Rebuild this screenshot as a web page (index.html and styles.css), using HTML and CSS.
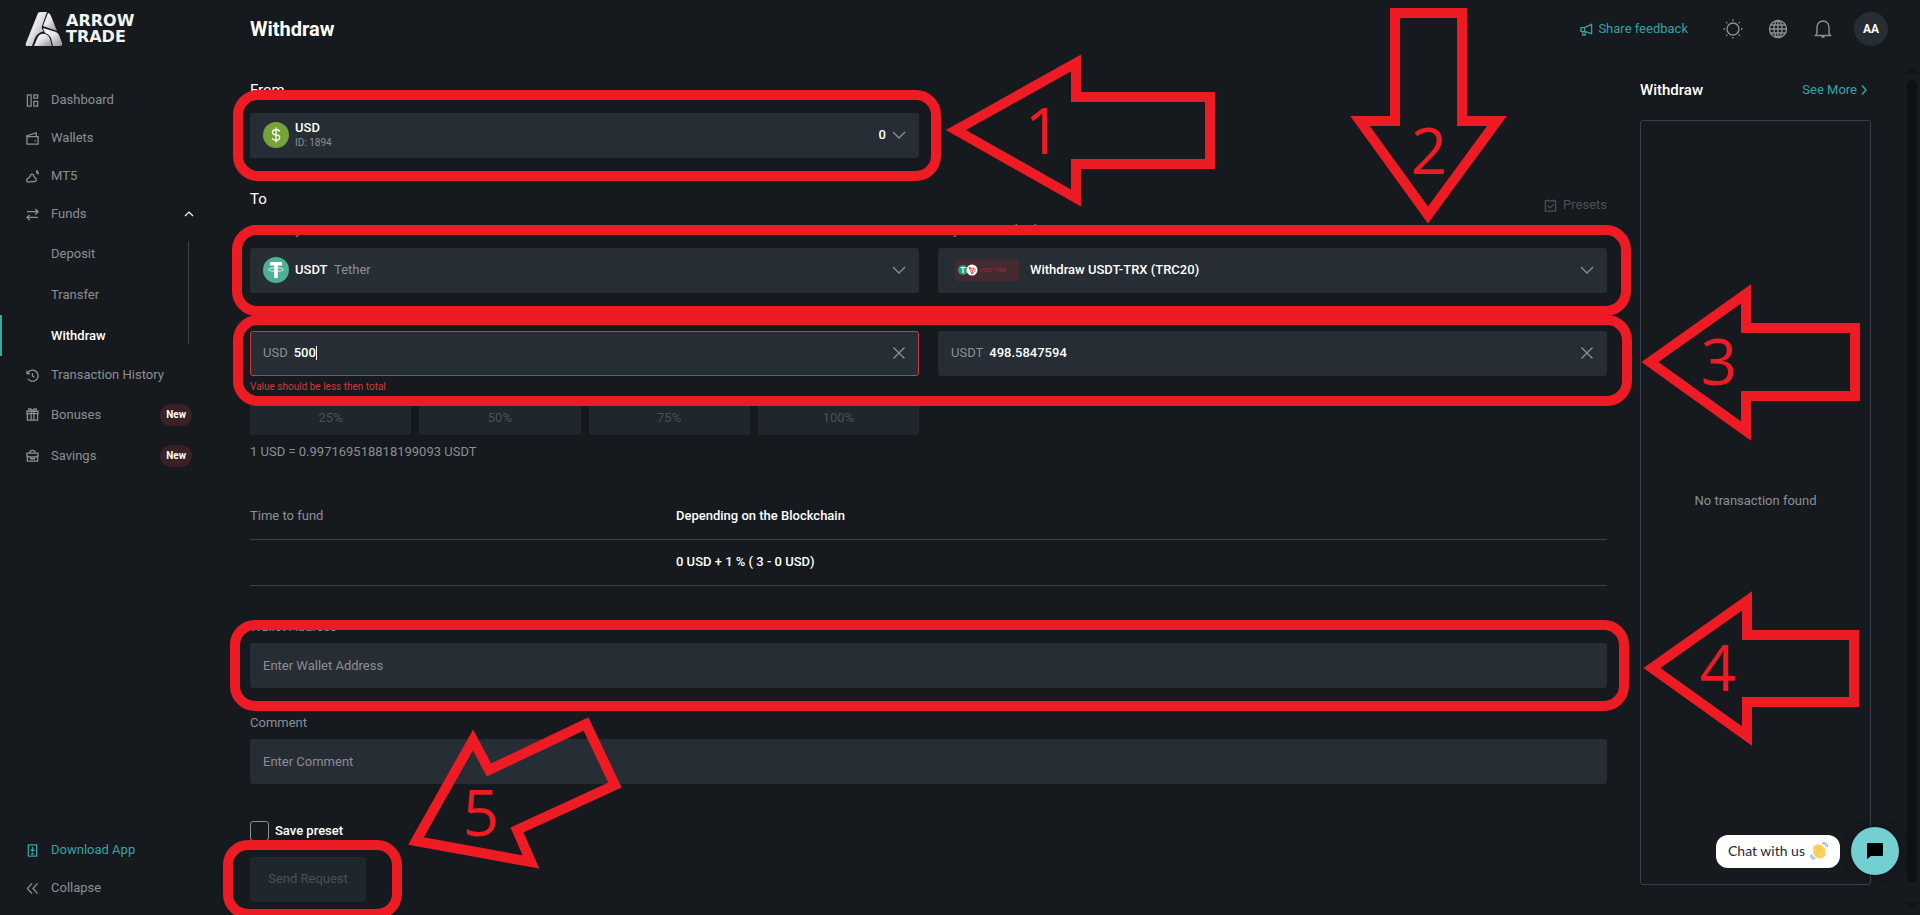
FILE: index.html
```html
<!DOCTYPE html>
<html lang="en">
<head>
    <meta charset="UTF-8">
    <meta name="viewport" content="width=device-width, initial-scale=1.0">
    <title>Withdraw - Arrow Trade</title>
    <link rel="stylesheet" href="styles.css">
</head>
<body>

    <div class="app">

        <!-- Sidebar -->
        <aside class="sidebar">
            <a class="logo" href="#">
                <svg width="38" height="36" viewBox="0 0 38 36">
                    <defs>
                        <linearGradient id="metal" x1="0" y1="0" x2="1" y2="1">
                            <stop offset="0" stop-color="#ffffff"/>
                            <stop offset="0.45" stop-color="#e6e6e8"/>
                            <stop offset="1" stop-color="#8e9094"/>
                        </linearGradient>
                    </defs>
                    <path fill="url(#metal)" d="M13 2 Q14 1 16 1 H22 L17 15 Q16 18 19 20 Q12 22 10 27 L7 35 H2 Q0 35 1 32 Z"/>
                    <path fill="url(#metal)" d="M23 2 Q25 2 26 5 L32 20 L18 15 Z"/>
                    <path fill="url(#metal)" d="M18 17 L31 21 Q33 22 34 24 L37 32 Q38 35 35 35 H28 L26 27 Q24 23 20 22 Z"/>
                    <path fill="url(#metal)" d="M12 28 Q14 22 20 23 Q24 24 25 28 L27 35 H9 Z"/>
                </svg>
                <span class="logo-text">ARROW<br>TRADE</span>
            </a>

            <nav class="menu">
                <a class="menu-item" href="#">
                    <svg class="icon" viewBox="0 0 14 14"><path d="M1.500 1h4v12h-4zM8.500 1h4v3.500h-4zM8.500 8h4v5h-4z"/></svg>
                    Dashboard
                </a>
                <a class="menu-item" href="#">
                    <svg class="icon" viewBox="0 0 14 14"><path d="M1 5h12v8H1zM1 5V4l10-3v3.500M10 8.500v1.500"/></svg>
                    Wallets
                </a>
                <a class="menu-item" href="#">
                    <svg class="icon" viewBox="0 0 14 14"><path d="M6.500 4.500a1.800 1.800 0 0 1 1.800 2l2 2.500a2 2 0 0 1-1 3.500L6.500 12.500 3 13a2 2 0 0 1-.500-4l2.200-2.500a1.800 1.800 0 0 1 1.800-2zM5 12.500h3M13 1h-1.500v1.500H13V4h-1.500"/></svg>
                    MT5
                </a>
                <a class="menu-item" href="#">
                    <svg class="icon" viewBox="0 0 14 14"><path d="M1 4h12M10 1l3 3-3 3M13 10H1M4 7.500L1 10l3 3"/></svg>
                    Funds
                    <svg class="menu-arrow" viewBox="0 0 10 10"><path d="M1 7l4-4 4 4"/></svg>
                </a>
                <div class="submenu">
                    <a class="submenu-item" href="#">Deposit</a>
                    <a class="submenu-item" href="#">Transfer</a>
                    <a class="submenu-item active" href="#">Withdraw</a>
                </div>
                <a class="menu-item" href="#">
                    <svg class="icon" viewBox="0 0 14 14"><path d="M1 1.500V5h3.500M1.500 5A6 6 0 1 1 2 10.500M7 4.500V7.500l2 1.500"/></svg>
                    Transaction History
                </a>
                <a class="menu-item tall" href="#">
                    <svg class="icon" viewBox="0 0 14 14"><path d="M1 3.500h12V6H1zM1.500 6v7h11V6M5.500 3.500V13M8.500 3.500V13M3 3.500V1h2l2 2 2-2h2v2.500"/></svg>
                    Bonuses
                    <span class="tag">New</span>
                </a>
                <a class="menu-item tall" href="#">
                    <svg class="icon" viewBox="0 0 14 14"><path d="M1.500 7.500V13h11V7.500M1 4.500h12v3l-3 1H4l-3-1zM5 8v2.500h4V8M4 4.500Q4 1.500 7 1.500t3 3"/></svg>
                    Savings
                    <span class="tag">New</span>
                </a>
            </nav>

            <div class="menu-bottom">
                <a class="menu-item teal" href="#">
                    <svg class="icon" viewBox="0 0 14 14"><path d="M2.500 1h9v12h-9zM7 3v5M5 6l2 2 2-2M5.500 10.500h3"/></svg>
                    Download App
                </a>
                <a class="menu-item" href="#">
                    <svg class="icon" viewBox="0 0 14 14"><path d="M6.500 1.500L1.500 7l5 5.500M12.500 1.500L7.500 7l5 5.500"/></svg>
                    Collapse
                </a>
            </div>
        </aside>

        <div class="page">

            <header class="topbar">
                <h1>Withdraw</h1>
                <a class="feedback" href="#">
                    <svg class="icon" viewBox="0 0 14 14"><path d="M1 5h4l7.500-3.500v10L5 9H1zM5 5v4M3 9v4h2.500V9"/></svg>
                    Share feedback
                </a>
                <div class="tools">
                    <button class="tool" type="button" aria-label="Theme">
                        <svg viewBox="0 0 20 20"><circle cx="10" cy="10" r="6"/><path d="M10 .5v1.500M10 18v1.500M.5 10h1.500M18 10h1.500M3.300 3.300l1 1M15.700 15.700l1 1M3.300 16.700l1-1M15.700 4.300l1-1"/></svg>
                    </button>
                    <button class="tool" type="button" aria-label="Language">
                        <svg viewBox="0 0 20 20"><circle cx="10" cy="10" r="8.500"/><ellipse cx="10" cy="10" rx="4" ry="8.500"/><path d="M10 1.500v17M1.500 10h17M2.500 6h15M2.500 14h15"/></svg>
                    </button>
                    <button class="tool" type="button" aria-label="Notifications">
                        <svg viewBox="0 0 20 20"><path d="M2.500 16.500h15l-1.500-2.500V8a6 6 0 0 0-12 0v6zM8.500 18h3"/></svg>
                    </button>
                    <button class="avatar" type="button">AA</button>
                </div>
            </header>

            <div class="columns">
                <main>
                    <form>
                        <h2><label for="fromWallet">From</label></h2>
                        <div class="row">
                            <div class="field">
                                <svg class="coin" viewBox="0 0 26 26">
                                    <circle cx="13" cy="13" r="13" fill="#75a33a"/>
                                    <path d="M16.500 9.500Q16 7.500 13 7.500T9.500 10 13 12.800 16.700 15.800 13 18.300 9.300 16M13 5.500v15" fill="none" stroke="#fff" stroke-width="1.300"/>
                                </svg>
                                <div class="wallet">
                                    <select id="fromWallet"><option>USD</option></select>
                                    <small>ID: 1894</small>
                                </div>
                                <span class="balance">0</span>
                                <svg class="chevron" viewBox="0 0 14 14"><path d="M1 4l6 6 6-6"/></svg>
                            </div>
                            <div></div>
                        </div>

                        <div class="to-head">
                            <h2>To</h2>
                            <button class="presets" type="button" disabled>
                                <svg class="icon" viewBox="0 0 14 14"><path d="M1.500 2h11v11h-11zM4 2V.5M10 2V.5M4 7l2.500 2.500L10.500 5.500"/></svg>
                                Presets
                            </button>
                        </div>

                        <div class="row">
                            <div>
                                <label class="caption" for="currency">Currency</label>
                                <div class="field">
                                    <svg class="coin" viewBox="0 0 26 26">
                                        <circle cx="13" cy="13" r="13" fill="#50af95"/>
                                        <path d="M7 5h12v3.500h-4.200V21h-3.600V8.500H7z" fill="#fff"/>
                                        <ellipse cx="13" cy="12.500" rx="7.500" ry="1.800" fill="none" stroke="#fff" stroke-width="0.800"/>
                                    </svg>
                                    <select id="currency"><option>USDT</option></select>
                                    <span class="muted">Tether</span>
                                    <svg class="chevron" viewBox="0 0 14 14"><path d="M1 4l6 6 6-6"/></svg>
                                </div>
                            </div>
                            <div>
                                <label class="caption" for="method">Payment Method</label>
                                <div class="field method">
                                    <span class="pair">
                                        <svg width="20" height="12" viewBox="0 0 20 12">
                                            <circle cx="5" cy="6" r="5" fill="#26a17b"/>
                                            <path d="M2.500 3.500h5M5 3.500v5.500" stroke="#fff" stroke-width="1.200"/>
                                            <circle cx="14" cy="6" r="5.500" fill="#fff"/>
                                            <path d="M11 3.500l5 1 1.500 1.500-3.500 4zM11 3.500l3.500 2.500 2-1.500M14.500 6l-.500 4" fill="none" stroke="#d8363c" stroke-width="0.800"/>
                                        </svg>
                                        USDT - TRX
                                    </span>
                                    <select id="method"><option>Withdraw USDT-TRX (TRC20)</option></select>
                                    <svg class="chevron" viewBox="0 0 14 14"><path d="M1 4l6 6 6-6"/></svg>
                                </div>
                            </div>
                        </div>

                        <div class="row amounts">
                            <div>
                                <div class="field invalid">
                                    <label class="muted" for="amountFrom">USD</label>
                                    <input class="amount" id="amountFrom" type="text" value="500">
                                    <span class="caret"></span>
                                    <button class="clear" type="button" aria-label="Clear"><svg viewBox="0 0 14 14"><path d="M1.500 1.500l11 11M12.500 1.500l-11 11"/></svg></button>
                                </div>
                                <p class="error">Value should be less then total</p>
                                <div class="percents">
                                    <button type="button" disabled>25%</button>
                                    <button type="button" disabled>50%</button>
                                    <button type="button" disabled>75%</button>
                                    <button type="button" disabled>100%</button>
                                </div>
                                <p class="rate">1 USD = 0.997169518818199093 USDT</p>
                            </div>
                            <div>
                                <div class="field">
                                    <label class="muted" for="amountTo">USDT</label>
                                    <input class="amount" id="amountTo" type="text" value="498.5847594">
                                    <button class="clear" type="button" aria-label="Clear"><svg viewBox="0 0 14 14"><path d="M1.500 1.500l11 11M12.500 1.500l-11 11"/></svg></button>
                                </div>
                            </div>
                        </div>

                        <table class="info">
                            <tr>
                                <th>Time to fund</th>
                                <td>Depending on the Blockchain</td>
                            </tr>
                            <tr>
                                <th></th>
                                <td>0 USD + 1 % ( 3 - 0 USD)</td>
                            </tr>
                        </table>

                        <label class="caption" for="walletAddress">Wallet Address</label>
                        <input class="field" id="walletAddress" type="text" placeholder="Enter Wallet Address">

                        <label class="caption comment" for="comment">Comment</label>
                        <input class="field" id="comment" type="text" placeholder="Enter Comment">

                        <label class="save">
                            <input type="checkbox">
                            Save preset
                        </label>

                        <button class="send" type="submit" disabled>Send Request</button>
                    </form>
                </main>

                <section class="history">
                    <div class="history-head">
                        <h2>Withdraw</h2>
                        <a href="#">See More <svg width="6" height="12" viewBox="0 0 6 12"><path d="M1 1.500L5 6l-4 4.500"/></svg></a>
                    </div>
                    <div class="history-box">No transaction found</div>
                </section>
            </div>
        </div>

        <div class="scroll">
            <span class="scroll-up"></span>
            <span class="scroll-thumb"></span>
            <span class="scroll-down"></span>
        </div>
    </div>

    <div class="chat">
        <div class="chat-text">
            Chat with us
            <svg width="18" height="18" viewBox="0 0 18 18">
                <path d="M3 7Q2 5 4 4.500L5.500 3Q7 1.500 8.500 2.500L12 3 15 6.500 16 12Q14 17 9 16.500 5 16 3.500 12Q2 10 3.500 9.500Z" fill="#ffd25f"/>
                <path d="M6 7l4 3M8 5l4 3.500M5.500 10l3 2.500" stroke="#e6b140" stroke-width="0.700" fill="none"/>
                <path d="M12 1.500q3.500-.5 4 3.500M13 .5q4.500 0 4.500 4.500M1.500 12q0 4 4 4.500M.5 13.500q0 3.500 3.500 4" stroke="#5da8e0" stroke-width="0.900" fill="none"/>
            </svg>
        </div>
        <button class="chat-button" type="button" aria-label="Open chat">
            <svg width="18" height="18" viewBox="0 0 18 18"><path d="M2 1h14q1 0 1 1v11q0 1-1 1H5l-4 3V2q0-1 1-1z" fill="#000"/></svg>
        </button>
    </div>

    <!-- Step marks drawn over the page -->
    <svg class="steps" width="1920" height="915" viewBox="0 0 1920 915">
        <rect x="238" y="95" width="698" height="81" rx="20"/>
        <rect x="237" y="230" width="1389" height="81" rx="20"/>
        <rect x="238" y="320" width="1389" height="81" rx="20"/>
        <rect x="235" y="625" width="1389" height="81" rx="20"/>
        <rect x="228" y="845" width="169" height="69" rx="20"/>
        <path d="M956 130L1076 63V97H1210V164H1076V198Z"/>
        <path d="M1395 13H1462V121H1497L1428 215 1360 121H1395Z"/>
        <path d="M1650 362L1746 294V328H1855V396H1746V431Z"/>
        <path d="M1652 668L1747 601V635H1854V702H1747V736Z"/>
        <path d="M416 841L473 740 489 770 586 724 615 785 517 830 531 862Z"/>
        <text x="1043" y="154">1</text>
        <text x="1429" y="174">2</text>
        <text x="1719" y="385">3</text>
        <text x="1718" y="691">4</text>
        <text x="481" y="836">5</text>
    </svg>

</body>
</html>
```

FILE: styles.css
```css
* {
    box-sizing: border-box;
}
body {
    margin: 0;
    background-color: #161a1e;
    color: #8a8f94;
    font-family: Roboto, "Liberation Sans", sans-serif;
    font-size: 13px;
    line-height: 16px;
    position: relative;
    overflow: hidden;
}
a {
    color: inherit;
    text-decoration: none;
}
h1, h2, p {
    margin: 0;
}
h1, h2 {
    color: #fff;
}
h1 {
    font-size: 20px;
    font-weight: 700;
    line-height: 24px;
}
h2 {
    font-size: 15px;
    font-weight: 400;
    line-height: 20px;
}
button, input, select {
    font: inherit;
    color: inherit;
    background: none;
    border: none;
    padding: 0;
    margin: 0;
}
svg {
    flex: none;
    fill: none;
    stroke: currentColor;
}
.logo svg, .coin, .pair svg, .chat svg {
    stroke: none;
}
.icon {
    width: 13px;
    height: 13px;
    stroke-width: 1.4;
}
.app {
    display: flex;
    min-height: 100vh;
}

/* Sidebar */
.sidebar {
    width: 250px;
    flex: none;
    display: flex;
    flex-direction: column;
}
.logo {
    display: flex;
    align-items: center;
    gap: 3px;
    height: 81px;
    padding: 0 0 24px 25px;
}
.logo-text {
    color: #f2f2f3;
    font-family: "DejaVu Sans", sans-serif;
    font-weight: 700;
    font-size: 16px;
    line-height: 16px;
}
.menu-item {
    display: flex;
    align-items: center;
    gap: 12px;
    height: 38px;
    padding-left: 26px;
    padding-right: 58px;
}
.menu-item.tall {
    height: 41px;
}
.menu-arrow {
    width: 10px;
    height: 10px;
    margin-left: auto;
    margin-right: -2px;
    color: #fff;
    stroke-width: 1.2;
}
.submenu {
    position: relative;
}
.submenu::after {
    content: "";
    position: absolute;
    left: 188px;
    top: 8px;
    bottom: 12px;
    border-left: 1px solid #3c424a;
}
.submenu-item {
    display: flex;
    align-items: center;
    height: 41px;
    padding-left: 49px;
    border-left: 2px solid transparent;
}
.submenu-item.active {
    color: #fff;
    font-weight: 500;
    border-color: #3aa6a6;
}
.tag {
    margin-left: auto;
    padding: 3px 6px;
    border-radius: 12px;
    background-color: #3b2024;
    color: #fff;
    font-size: 10px;
    font-weight: 700;
}
.teal, .feedback, .history-head a {
    color: #35a3a3;
}
.menu-bottom {
    margin-top: auto;
    padding-bottom: 8px;
}

/* Top bar */
.page {
    flex: 1;
}
.topbar {
    display: flex;
    align-items: center;
    height: 58px;
    padding-right: 19px;
}
.feedback {
    display: flex;
    align-items: center;
    gap: 5px;
    margin-left: auto;
}
.tools {
    display: flex;
    align-items: center;
    gap: 25px;
    margin-left: 35px;
}
.tool {
    width: 20px;
    height: 20px;
}
.tool svg {
    display: block;
    stroke-width: 1.4;
}
.avatar {
    width: 34px;
    height: 34px;
    margin-left: -4px;
    border-radius: 50%;
    background-color: #272d34;
    color: #fff;
    font-size: 12px;
    font-weight: 700;
}

/* Form */
.columns {
    display: flex;
    gap: 33px;
    padding: 22px 36px 0 0;
}
main {
    flex: 1;
}
.row {
    display: grid;
    grid-template-columns: 1fr 1fr;
    gap: 19px;
}
h2 + .row {
    margin-top: 13px;
}
.field {
    display: flex;
    align-items: center;
    gap: 6px;
    width: 100%;
    height: 45px;
    padding: 0 12px;
    border: 1px solid transparent;
    border-radius: 3px;
    background-color: #272d34;
}
div.field {
    padding-bottom: 2px;
}
.field.invalid {
    border-color: #d0393e;
}
.field select {
    appearance: none;
    color: #fff;
    font-weight: 500;
}
.field::placeholder {
    color: #8a8f94;
    opacity: 1;
}
.coin {
    width: 26px;
    height: 26px;
}
.wallet {
    display: flex;
    flex-direction: column;
}
.wallet small {
    font-size: 10px;
    line-height: 14px;
}
.balance {
    margin-left: auto;
    color: #fff;
    font-weight: 500;
}
.chevron {
    width: 14px;
    height: 14px;
    margin-left: auto;
    stroke-width: 1.3;
}
.balance + .chevron {
    margin-left: 0;
}
.method {
    gap: 11px;
    padding-left: 16px;
}
.pair {
    display: flex;
    align-items: center;
    gap: 2px;
    width: 64px;
    height: 22px;
    padding-left: 3px;
    border-radius: 2px;
    background-color: #452b30;
    color: #b3282f;
    font-size: 5px;
}
.to-head {
    display: flex;
    justify-content: space-between;
    align-items: flex-start;
    height: 33px;
    margin-top: 31px;
}
.presets {
    display: flex;
    align-items: center;
    gap: 6px;
    margin-top: 8px;
    color: #4b5055;
}
.caption {
    display: block;
    margin-bottom: 8px;
}
.row .caption {
    margin-bottom: 10px;
}
.amounts {
    margin-top: 38px;
}
.amount {
    field-sizing: content;
    color: #fff;
    font-weight: 500;
}
.amount:focus {
    outline: none;
}
.caret {
    width: 1px;
    height: 14px;
    margin-left: -6px;
    background-color: #fff;
}
.clear {
    width: 14px;
    height: 14px;
    margin-left: auto;
}
.clear svg {
    display: block;
    stroke-width: 1.4;
}
.error {
    margin-top: 3px;
    color: #d0393e;
    font-size: 10px;
}
.percents {
    display: grid;
    grid-template-columns: repeat(4, 1fr);
    gap: 8px;
    margin: 5px 0 9px;
}
.percents button, .send {
    height: 35px;
    border-radius: 3px;
    background-color: #20262d;
    color: #4b5055;
}
.info {
    width: 100%;
    margin: 33px 0;
    border-collapse: collapse;
}
.info th, .info td {
    height: 46px;
    padding: 0;
    border-bottom: 1px solid #3c424a;
    text-align: left;
    font-weight: 400;
}
.info th {
    width: 426px;
}
.info td {
    color: #fff;
    font-weight: 500;
}
.comment {
    margin-top: 27px;
}
.save {
    display: flex;
    align-items: center;
    gap: 6px;
    margin-top: 37px;
    color: #fff;
    font-weight: 500;
}
.save input {
    appearance: none;
    width: 19px;
    height: 20px;
    border: 1px solid #8a8f94;
    border-radius: 3px;
}
.send {
    width: 116px;
    height: 45px;
    margin-top: 16px;
}

/* Right column */
.history {
    width: 231px;
}
.history-head {
    display: flex;
    justify-content: space-between;
    align-items: center;
    padding-right: 4px;
}
.history-head h2 {
    font-weight: 500;
}
.history-head a {
    display: flex;
    align-items: center;
    gap: 4px;
}
.history-head a svg {
    stroke-width: 1.5;
}
.history-box {
    display: flex;
    align-items: center;
    justify-content: center;
    height: calc(100vh - 150px);
    margin-top: 20px;
    padding-bottom: 4px;
    border: 1px solid #3a404b;
    border-radius: 3px;
}
.scroll {
    width: 13px;
    display: flex;
    flex-direction: column;
    padding: 68px 3px 7px 0;
    gap: 7px;
}
.scroll-thumb {
    flex: 1;
    margin-bottom: 14px;
    border-radius: 5px;
    background-color: #0e1114;
}
.scroll-up, .scroll-down {
    border: 5px solid transparent;
    border-top-width: 0;
    border-bottom-color: #0e1114;
}
.scroll-down {
    border-top: 5px solid #0e1114;
    border-bottom-width: 0;
}

/* Chat widget */
.chat {
    position: absolute;
    right: 21px;
    bottom: 40px;
    display: flex;
    align-items: center;
    gap: 11px;
}
.chat-text {
    display: flex;
    align-items: center;
    gap: 5px;
    height: 33px;
    padding: 0 12px;
    border-radius: 12px;
    background-color: #fff;
    color: #1f2937;
    font-family: Lato, sans-serif;
    font-size: 14px;
}
.chat-button {
    display: grid;
    place-items: center;
    width: 48px;
    height: 48px;
    border-radius: 50%;
    background-color: #74cfd0;
    box-shadow: 0 0 8px rgba(0, 0, 0, 0.4);
}

/* Step marks */
.steps {
    position: absolute;
    left: 0;
    top: 0;
    stroke: #ed1c24;
    stroke-width: 10;
    pointer-events: none;
}
.steps text {
    fill: #ed1c24;
    stroke: none;
    font-family: "Open Sans", "Noto Sans", sans-serif;
    font-size: 64px;
    text-anchor: middle;
}
```
